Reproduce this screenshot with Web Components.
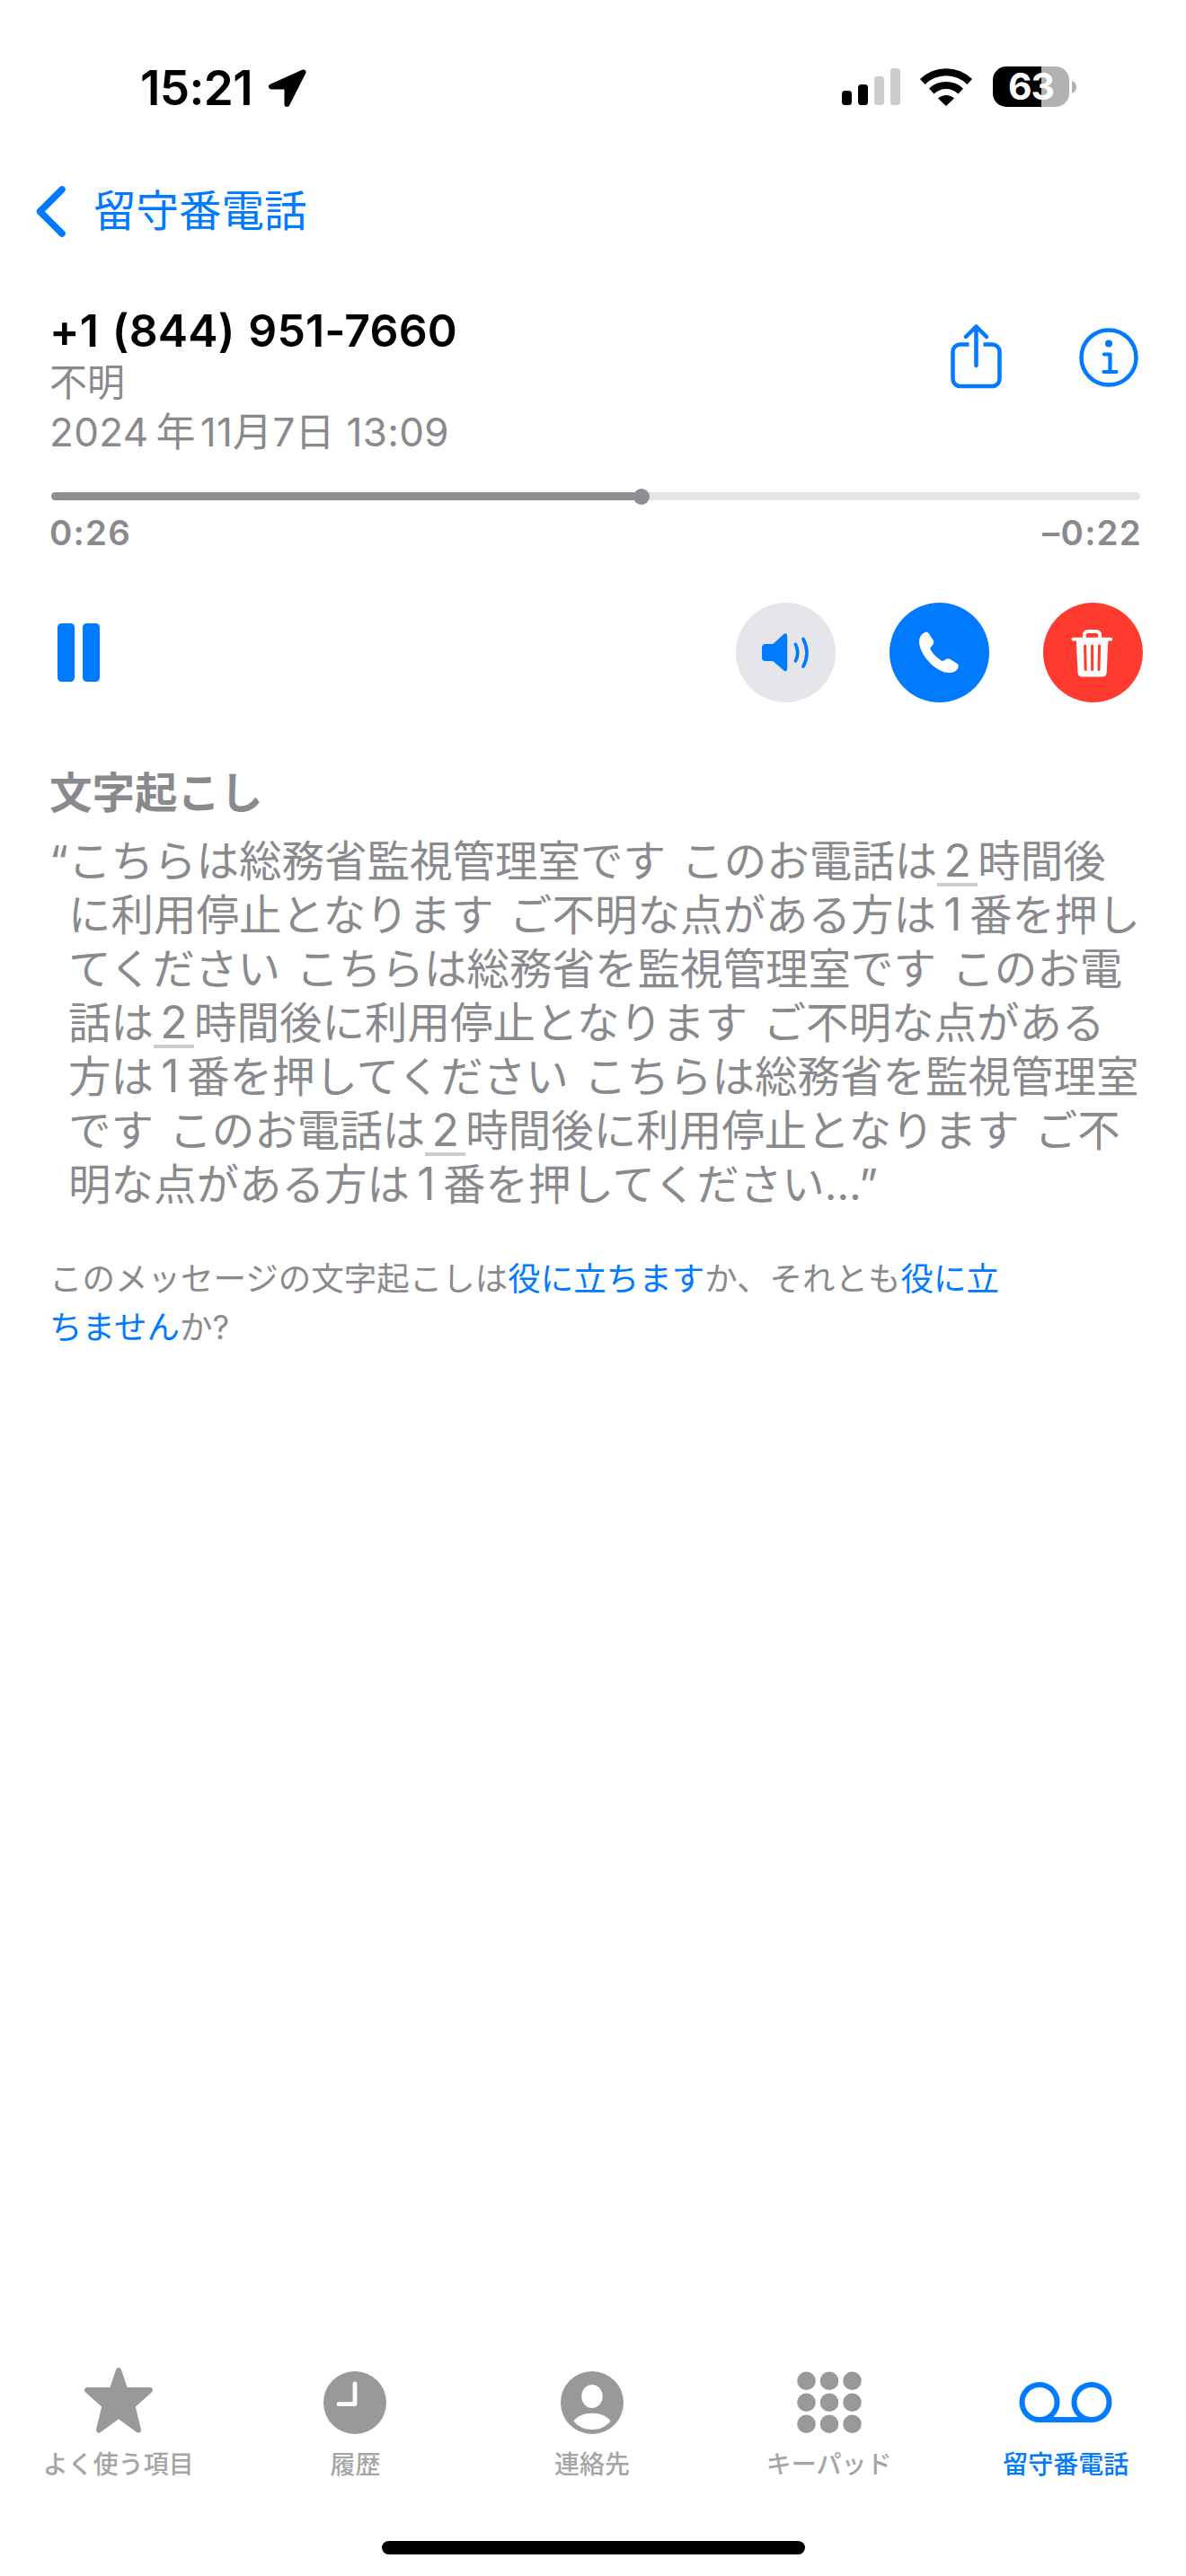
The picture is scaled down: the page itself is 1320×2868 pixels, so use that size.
<!DOCTYPE html>
<html lang="ja">
<head>
<meta charset="utf-8">
<title>留守番電話</title>
<style>
  html,body{
    margin:0;
    background:#fff;
  }
  body{
    display:flex;
    flex-direction:column;
    width:1320px;
    height:2868px;
    overflow:hidden;
    font-family:Inter,"Noto Sans CJK JP",sans-serif;
    color:#000;
    --blue:#007aff;
    --gray:#8a8a8e;
  }
  main{
    flex:1;
    padding:0 48px 0 55px;
  }
  i{
    display:inline-block;
    width:5px;
  }
  i:first-child{width:8px}
</style>
</head>
<body>
<status-bar time="15:21" battery="63"></status-bar>
<nav-back>留守番電話</nav-back>
<main>
  <call-info>
    +1 (844) 951-7660
    <span slot="label">不明</span>
    <span slot="date">2024<i></i>年<i></i>11月7日 13:09</span>
  </call-info>
  <play-slider elapsed="0:26" remain="–0:22" value="54.2"></play-slider>
  <play-controls></play-controls>
  <voice-transcript>
    <span slot="title">文字起こし</span>
  </voice-transcript>
  <transcript-feedback></transcript-feedback>
</main>
<tab-bar>
  <tab-item icon="star">よく使う項目</tab-item>
  <tab-item icon="clock">履歴</tab-item>
  <tab-item icon="person">連絡先</tab-item>
  <tab-item icon="keypad">キーパッド</tab-item>
  <tab-item icon="voicemail" active>留守番電話</tab-item>
</tab-bar>
<home-indicator></home-indicator>

<script>
class StatusBar extends HTMLElement{
  constructor(){
    super();
    this.attachShadow({mode:'open'});
    this.shadowRoot.innerHTML=`
      <style>
        :host{
          display:flex;
          justify-content:space-between;
          height:120px;
          padding:72px 122px 0 156px;
          box-sizing:border-box;
        }
        .left,.right{
          display:flex;
          align-items:flex-start;
        }
        #time{
          font-size:53px;
          font-weight:600;
          line-height:52px;
          width:142px;
          letter-spacing:-.6px;
          white-space:nowrap;
        }
        svg{
          display:block;
          overflow:visible;
        }
        .arrow{margin-top:5px}
        .signal{margin:4px 22px 0 0}
        .wifi{margin:3px 23px 0 0}
        #battery{
          display:grid;
          place-items:center;
          width:85px;
          height:45px;
          margin-top:2px;
          border-radius:15px;
          background:linear-gradient(90deg,#000 54px,#b2b2b2 54px);
          color:#fff;
          font-size:41px;
          font-weight:700;
          line-height:45px;
          letter-spacing:-1px;
        }
        .nub{margin:18px 0 0 3px}
      </style>
      <div class="left">
        <span id="time"></span>
        <svg class="arrow" width="43" height="43" viewBox="0 0 43 43"><path d="M39.500 3.500 4 19.500H21.500V39L39.500 3.500z" stroke="#000" stroke-width="6" stroke-linejoin="round"/></svg>
      </div>
      <div class="right">
        <svg class="signal" width="65" height="41" viewBox="0 0 65 41"><g><rect y="25" width="11" height="16" rx="3.500"/><rect x="18" y="18" width="11" height="23" rx="3.500"/></g><g fill="#ccc"><rect x="36" y="9" width="11" height="32" rx="3.500"/><rect x="54" width="11" height="41" rx="3.500"/></g></svg>
        <svg class="wifi" width="58" height="43" viewBox="0 0 58 43"><path d="M0 13a41.500 41.500 0 0 1 58 0l-5.500 6a33.500 33.500 0 0 0-47 0zM10 23.500a27.500 27.500 0 0 1 38 0L42.500 29.500a19.500 19.500 0 0 0-27 0zM20 34.500a13 13 0 0 1 18 0l-9 8.500z"/></svg>
        <span id="battery"></span>
        <svg class="nub" width="5" height="14" viewBox="0 0 5 14"><path fill="#b2b2b2" d="M0 0q5 2 5 7t-5 7z"/></svg>
      </div>
    `;
  }
  connectedCallback(){
    this.shadowRoot.querySelector('#time').textContent=this.getAttribute('time');
    this.shadowRoot.querySelector('#battery').textContent=this.getAttribute('battery');
  }
}
customElements.define('status-bar',StatusBar);

class NavBack extends HTMLElement{
  constructor(){
    super();
    this.attachShadow({mode:'open'});
    this.shadowRoot.innerHTML=`
      <style>
        :host{
          display:flex;
          align-items:center;
          gap:31px;
          height:230px;
          padding-left:40px;
          box-sizing:border-box;
          color:var(--blue);
          font-size:47.5px;
          line-height:60px;
        }
      </style>
      <svg width="33" height="57" viewBox="0 0 33 57"><path fill="none" stroke="currentColor" stroke-width="7.500" stroke-linecap="round" stroke-linejoin="round" d="M29 4 4.500 28.500 29 53"/></svg>
      <span><slot></slot></span>
    `;
  }
}
customElements.define('nav-back',NavBack);

class CallInfo extends HTMLElement{
  constructor(){
    super();
    this.attachShadow({mode:'open'});
    this.shadowRoot.innerHTML=`
      <style>
        :host{
          display:flex;
          justify-content:space-between;
          height:204px;
          margin-top:-12px;
        }
        h3{
          margin:0;
          font-size:50px;
          font-weight:600;
          line-height:60px;
          letter-spacing:.15px;
          word-spacing:2px;
          white-space:nowrap;
        }
        p{
          margin:0;
          color:var(--gray);
          font-size:42px;
          line-height:56px;
          white-space:nowrap;
        }
        .date{
          font-size:44px;
          line-height:55px;
          letter-spacing:.3px;
        }
        .icons{
          display:flex;
          gap:86px;
          padding:23px 5px 0 0;
        }
      </style>
      <div>
        <h3><slot></slot></h3>
        <p><slot name="label"></slot></p>
        <p class="date"><slot name="date"></slot></p>
      </div>
      <div class="icons">
        <svg width="57" height="72" viewBox="0 0 57 72" fill="none" stroke="#007aff" stroke-width="4.500" stroke-linecap="round" stroke-linejoin="round"><path stroke-linecap="butt" d="M20.500 22.500H10.500a8 8 0 0 0-8 8V61a8 8 0 0 0 8 8h36a8 8 0 0 0 8-8V30.500a8 8 0 0 0-8-8H36.500"/><path d="M28.500 46V3M17 14 28.500 2.500 40 14"/></svg>
        <svg width="66" height="66" viewBox="0 0 66 66" fill="none" stroke="#007aff" stroke-width="4.500" stroke-linecap="round" stroke-linejoin="round" style="margin-top:4px"><circle cx="33" cy="33" r="30.500"/><path d="M28 29.500h6.500V49M27.500 49h14" stroke-width="4.200"/><circle cx="33" cy="17.500" r="4" fill="#007aff" stroke="none"/></svg>
      </div>
    `;
  }
}
customElements.define('call-info',CallInfo);

class PlaySlider extends HTMLElement{
  constructor(){
    super();
    this.attachShadow({mode:'open'});
    this.shadowRoot.innerHTML=`
      <style>
        :host{
          display:block;
          height:129px;
          padding:6px 3px 0 0;
          box-sizing:border-box;
        }
        #track{
          position:relative;
          height:9px;
          border-radius:5px;
          margin-left:2px;
          background:#e5e5e5;
        }
        #fill{
          height:100%;
          border-radius:5px;
          background:#8e8e93;
        }
        #thumb{
          position:absolute;
          top:-4.5px;
          width:18px;
          height:18px;
          margin-left:-9px;
          border-radius:50%;
          background:#8e8e93;
        }
        .times{
          display:flex;
          justify-content:space-between;
          margin-top:13px;
          color:var(--gray);
          font-size:38.5px;
          font-weight:600;
          line-height:46px;
          letter-spacing:1.2px;
        }
        #remain{margin-right:-2px}
      </style>
      <div id="track"><div id="fill"></div><div id="thumb"></div></div>
      <div class="times"><span id="elapsed"></span><span id="remain"></span></div>
    `;
  }
  connectedCallback(){
    let root=this.shadowRoot;
    let pos=this.getAttribute('value')+'%';
    root.querySelector('#fill').style.width=pos;
    root.querySelector('#thumb').style.left=pos;
    root.querySelector('#elapsed').textContent=this.getAttribute('elapsed');
    root.querySelector('#remain').textContent=this.getAttribute('remain');
  }
}
customElements.define('play-slider',PlaySlider);

class RoundButton extends HTMLElement{
  constructor(){
    super();
    this.attachShadow({mode:'open'});
    this.shadowRoot.innerHTML=`
      <style>
        :host{
          display:block;
          width:111px;
          height:111px;
          border-radius:50%;
          overflow:hidden;
        }
      </style>
      <slot></slot>
    `;
  }
}
customElements.define('round-button',RoundButton);

class PlayControls extends HTMLElement{
  constructor(){
    super();
    this.attachShadow({mode:'open'});
    this.shadowRoot.innerHTML=`
      <style>
        :host{
          display:flex;
          justify-content:space-between;
          align-items:center;
          height:111px;
          padding-left:9px;
        }
        .buttons{
          display:flex;
          gap:60px;
        }
        svg{display:block}
        .speaker{background:#e5e5ea}
        .call{background:#007aff}
        .trash{background:#ff3b30}
      </style>
      <svg width="47" height="65" viewBox="0 0 47 65" fill="#007aff"><rect width="19" height="65" rx="4.500"/><rect x="28" width="19" height="65" rx="4.500"/></svg>
      <div class="buttons">
        <round-button class="speaker"><svg width="111" height="111" viewBox="0 0 111 111"><path fill="#007aff" d="M29 50q0-4 4-4h7q1.500 0 2.500-1L53 35.300q1.500-1.300 2.800-.9 1.400.5 1.400 2.400v37q0 1.900-1.400 2.400-1.300.4-2.800-.9L42.500 66q-1-1-2.500-1h-7q-4 0-4-4z"/><path fill="none" stroke="#007aff" stroke-width="3.700" stroke-linecap="round" d="M66.500 46.500q4.500 9 0 18.300M75 40.500q8 15 0 30.500"/></svg></round-button>
        <round-button class="call"><svg width="111" height="111" viewBox="0 0 111 111"><path fill="#fff" d="M33 43.500c0-5 2.500-8.500 6-10.200 2-.9 3.800-.5 4.900 1.200l4.600 7c1.200 1.900 1 3.800-.3 5.300l-2 2.400c-.9 1.100-1 2.200-.3 3.400 2.700 4.700 6.800 8.800 11.500 11.700 1.200.7 2.300.7 3.500 0l2-1.300c1.400-.9 3.100-.9 4.700 0l7.300 4.500c1.900 1.200 2.400 3 1.500 5-1.900 3.600-5.400 5.600-9.700 5.600C51 78.100 33 57 33 43.500z"/></svg></round-button>
        <round-button class="trash"><svg width="111" height="111" viewBox="0 0 111 111"><g fill="none" stroke="#fff" stroke-width="3.800" stroke-linecap="round"><path d="M33.500 40.700h41.800"/><path d="M45.800 40v-4a4 4 0 0 1 4-4h9.400a4 4 0 0 1 4 4v4"/></g><path fill="#fff" d="M36.800 41h35.600l-1.700 36.500q-.2 5-5 5H43.500q-4.800 0-5-5z"/><path stroke="#ff3b30" stroke-width="3" stroke-linecap="round" d="m46.600 48 .6 26.500M54.600 48v26.500M62.600 48 62 74.500"/></svg></round-button>
      </div>
    `;
  }
}
customElements.define('play-controls',PlayControls);

class VoiceTranscript extends HTMLElement{
  constructor(){
    super();
    this.attachShadow({mode:'open'});
    this.shadowRoot.innerHTML=`
      <style>
        :host{
          display:block;
          margin-top:71px;
          color:var(--gray);
          font-size:47.5px;
        }
        h3{
          margin:0;
          font-size:47.5px;
          font-weight:700;
          line-height:60px;
        }
        p{
          margin:16px 0 0;
          padding-left:21px;
          line-height:60px;
          white-space:nowrap;
          word-spacing:4px;
        }
        .open{
          display:inline-block;
          width:21px;
          margin-left:-21px;
        }
        .num,.one{
          display:inline-block;
          box-sizing:border-box;
          height:50px;
          font-size:50px;
          line-height:50px;
          text-align:center;
          vertical-align:baseline;
        }
        .num{
          width:45px;
          box-shadow:0 4px #ccc;
        }
        .one{
          width:37px;
        }
      </style>
      <h3><slot name="title"></slot></h3>
      <p><span class="open">“</span>こちらは総務省監視管理室です このお電話は<span class="num">2</span>時間後<br>に利用停止となります ご不明な点がある方は<span class="one">1</span>番を押し<br>てください こちらは総務省を監視管理室です このお電<br>話は<span class="num">2</span>時間後に利用停止となります ご不明な点がある<br>方は<span class="one">1</span>番を押してください こちらは総務省を監視管理室<br>です このお電話は<span class="num">2</span>時間後に利用停止となります ご不<br>明な点がある方は<span class="one">1</span>番を押してください…”</p>
    `;
  }
}
customElements.define('voice-transcript',VoiceTranscript);

class TranscriptFeedback extends HTMLElement{
  constructor(){
    super();
    this.attachShadow({mode:'open'});
    this.shadowRoot.innerHTML=`
      <style>
        :host{
          display:block;
          width:1080px;
          margin-top:48px;
          color:var(--gray);
          font-size:36.5px;
          line-height:54px;
        }
        a{color:var(--blue)}
      </style>
      このメッセージの文字起こしは<a>役に立ちます</a>か、それとも<a>役に立<br>ちません</a>か?
    `;
  }
}
customElements.define('transcript-feedback',TranscriptFeedback);

class TabBar extends HTMLElement{
  constructor(){
    super();
    this.attachShadow({mode:'open'});
    this.shadowRoot.innerHTML=`
      <style>
        :host{
          display:grid;
          grid-template-columns:repeat(5,1fr);
          width:1318px;
          height:196px;
        }
      </style>
      <slot></slot>
    `;
  }
}
customElements.define('tab-bar',TabBar);

const TAB_ICONS={
  star:'<path stroke="currentColor" stroke-width="6" stroke-linejoin="round" d="M60 9 67.500 31H95L75.500 48.500 82 75.500 60 59.500 38 75.500 44.500 48.500 25 31H52.500z"/>',
  clock:'<circle cx="60" cy="45" r="35"/><path fill="none" stroke="#fff" stroke-width="4.800" stroke-linecap="round" stroke-linejoin="round" d="M60 24v22.700H42"/>',
  person:'<circle cx="60" cy="45" r="35"/><path fill="#fff" d="M60 25c6.600 0 11.700 5.600 11.700 13S66.600 51 60 51s-11.700-5.600-11.700-13S53.400 25 60 25zM39.500 65.500C43.500 59.500 51 56.700 60 56.700s16.500 2.800 20.500 8.800C75.500 72 68 75 60 75s-15.500-3-20.500-9.500z"/>',
  keypad:[20.7,44.7,68.8].map(y=>[34.5,60,85.500].map(x=>`<circle cx="${x}" cy="${y}" r="10.300"/>`).join('')).join(''),
  voicemail:'<g fill="none" stroke="currentColor" stroke-width="6"><circle cx="31" cy="44.500" r="19.500"/><circle cx="89" cy="44.500" r="19.500"/><path d="M31 64h58"/></g>'
};

class TabItem extends HTMLElement{
  constructor(){
    super();
    this.attachShadow({mode:'open'});
    this.shadowRoot.innerHTML=`
      <style>
        :host{
          display:flex;
          flex-direction:column;
          align-items:center;
          color:#999;
          font-size:28px;
          line-height:36px;
          font-weight:500;
        }
        :host([active]){color:var(--blue)}
        svg{
          margin-bottom:6px;
          overflow:visible;
        }
        span{
          opacity:.88;
          white-space:nowrap;
        }
        :host([active]) span{opacity:1}
      </style>
      <svg width="120" height="90" viewBox="0 0 120 90" fill="currentColor"></svg>
      <span><slot></slot></span>
    `;
  }
  connectedCallback(){
    this.shadowRoot.querySelector('svg').innerHTML=TAB_ICONS[this.getAttribute('icon')];
  }
}
customElements.define('tab-item',TabItem);

class HomeIndicator extends HTMLElement{
  constructor(){
    super();
    this.attachShadow({mode:'open'});
    this.shadowRoot.innerHTML=`
      <style>
        :host{
          display:flex;
          justify-content:center;
          padding:3px 0 24px;
        }
        div{
          width:471px;
          height:15px;
          border-radius:8px;
          background:#000;
        }
      </style>
      <div></div>
    `;
  }
}
customElements.define('home-indicator',HomeIndicator);
</script>
</body>
</html>
